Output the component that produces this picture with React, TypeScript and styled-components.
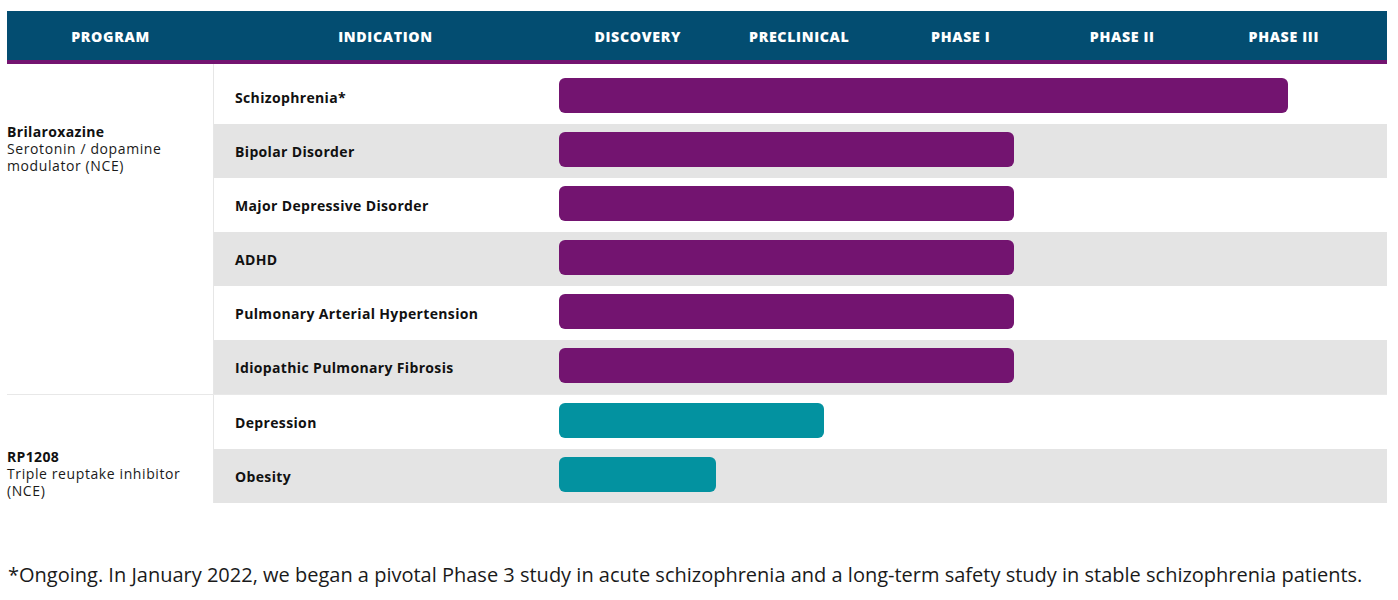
import React from "react";
import styled, { createGlobalStyle } from "styled-components";

const GlobalStyle = createGlobalStyle`
  html, body { margin: 0; padding: 0; background: #ffffff; }
  body { font-family: "Open Sans", "Liberation Sans", sans-serif; color: #111111; }
`;

const Page = styled.div`
  padding: 11px 11px 0 7px;
  width: 1380px;
`;

const Table = styled.div`
  display: flex;
  flex-direction: column;
`;

const HeaderRow = styled.div`
  display: grid;
  grid-template-columns: 207px 343px repeat(5, 161.5px) 1fr;
  height: 49px;
  align-items: center;
  background: #034d71;
  border-bottom: 4px solid #731470;
`;

const HeaderCell = styled.div`
  color: #ffffff;
  font-family: "Open Sans", sans-serif;
  font-weight: 800;
  font-size: 14.2px;
  letter-spacing: 0.65px;
  text-align: center;
  text-transform: uppercase;
  margin-top: 1px;
`;

const Group = styled.div<{ $last?: boolean }>`
  display: grid;
  grid-template-columns: 207px 1fr;
  border-bottom: ${(p) => (p.$last ? "none" : "1px solid #e8e8e8")};
`;

const ProgramCell = styled.div<{ $offset: number }>`
  padding-top: ${(p) => p.$offset}px;
  border-right: 1px solid #e6e6e6;
  font-size: 14px;
  letter-spacing: 0.6px;
  line-height: 17px;
  color: #1a1a1a;
`;

const ProgramName = styled.div`
  font-weight: 700;
  letter-spacing: 0.35px;
  color: #111111;
`;

const Rows = styled.div`
  display: flex;
  flex-direction: column;
`;

const Row = styled.div<{ $shade: boolean; $first?: boolean }>`
  display: grid;
  grid-template-columns: 344px 1fr;
  align-items: center;
  height: ${(p) => (p.$first ? 60 : 54)}px;
  padding-top: ${(p) => (p.$first ? 6 : 0)}px;
  box-sizing: border-box;
  background: ${(p) => (p.$shade ? "#e4e4e4" : "#ffffff")};
`;

const Indication = styled.div`
  padding-left: 21px;
  font-weight: 700;
  font-size: 14px;
  letter-spacing: 0.35px;
  color: #111111;
`;

const Track = styled.div`
  display: flex;
  align-items: flex-start;
  align-self: stretch;
  padding: 8px 0 0 1px;
  box-sizing: border-box;
`;

const Bar = styled.div<{ $color: string }>`
  height: 35px;
  border-radius: 6px;
  background: ${(p) => p.$color};
`;

const Footnote = styled.p`
  margin: 58px 0 0 1px;
  font-family: "Open Sans", sans-serif;
  font-size: 20px;
  letter-spacing: 0px;
  color: #1a1a1a;
`;

const PURPLE = "#731470";
const TEAL = "#0392a0";

const phases = ["Discovery", "Preclinical", "Phase I", "Phase II", "Phase III"];

type Item = { name: string; width: number };
type Program = { name: string; desc: string[]; color: string; items: Item[] };

const programs: Program[] = [
  {
    name: "Brilaroxazine",
    desc: ["Serotonin / dopamine", "modulator (NCE)"],
    color: PURPLE,
    items: [
      { name: "Schizophrenia*", width: 729 },
      { name: "Bipolar Disorder", width: 455 },
      { name: "Major Depressive Disorder", width: 455 },
      { name: "ADHD", width: 455 },
      { name: "Pulmonary Arterial Hypertension", width: 455 },
      { name: "Idiopathic Pulmonary Fibrosis", width: 455 },
    ],
  },
  {
    name: "RP1208",
    desc: ["Triple reuptake inhibitor", "(NCE)"],
    color: TEAL,
    items: [
      { name: "Depression", width: 265 },
      { name: "Obesity", width: 157 },
    ],
  },
];

export default function App() {
  return (
    <Page>
      <GlobalStyle />
      <Table>
        <HeaderRow>
          <HeaderCell>Program</HeaderCell>
          <HeaderCell>Indication</HeaderCell>
          {phases.map((p) => (
            <HeaderCell key={p}>{p}</HeaderCell>
          ))}
        </HeaderRow>
        {programs.map((prog, gi) => {
          const firstH = gi === 0 ? 59 : 53;
          return (
            <Group key={prog.name} $last={gi === programs.length - 1}>
              <ProgramCell $offset={firstH}>
                <ProgramName>{prog.name}</ProgramName>
                {prog.desc.map((d) => (
                  <div key={d}>{d}</div>
                ))}
              </ProgramCell>
              <Rows>
                {prog.items.map((it, i) => (
                  <Row key={it.name} $shade={i % 2 === 1} $first={gi === 0 && i === 0}>
                    <Indication>{it.name}</Indication>
                    <Track>
                      <Bar $color={prog.color} style={{ width: it.width }} />
                    </Track>
                  </Row>
                ))}
              </Rows>
            </Group>
          );
        })}
      </Table>
      <Footnote>
        *Ongoing. In January 2022, we began a pivotal Phase 3 study in acute schizophrenia and a long-term safety study in stable schizophrenia patients.
      </Footnote>
    </Page>
  );
}
